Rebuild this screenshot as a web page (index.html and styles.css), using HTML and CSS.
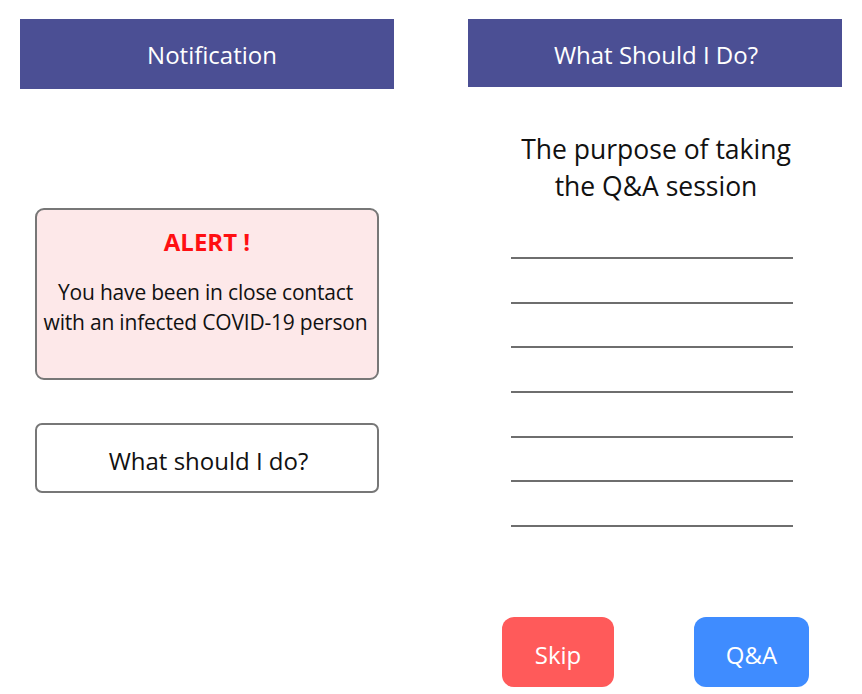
FILE: index.html
```html
<!DOCTYPE html>
<html>
<head>
<meta charset="utf-8">
<link rel="stylesheet" href="styles.css">
</head>
<body>
<div class="page">
  <section class="col left">
    <header class="bar bar-left">Notification</header>
    <div class="alert">
      <div class="alert-title">ALERT !</div>
      <div class="alert-text">You have been in close contact<br>with an infected COVID-19 person</div>
    </div>
    <div class="ask">What should I do?</div>
  </section>
  <section class="col right">
    <header class="bar bar-right">What Should I Do?</header>
    <div class="purpose">The purpose of taking<br>the Q&amp;A session</div>
    <div class="lines">
      <div class="line"></div>
      <div class="line"></div>
      <div class="line"></div>
      <div class="line"></div>
      <div class="line"></div>
      <div class="line"></div>
      <div class="line"></div>
    </div>
    <div class="actions">
      <button class="btn skip">Skip</button>
      <button class="btn qa">Q&amp;A</button>
    </div>
  </section>
</div>
</body>
</html>
```

FILE: styles.css
```css
* { box-sizing: border-box; }
html, body { margin: 0; padding: 0; background: #ffffff; }
body {
  font-family: "Open Sans", "Noto Sans", "Liberation Sans", sans-serif;
  color: #111111;
  width: 862px;
  height: 694px;
  overflow: hidden;
}
.page {
  display: flex;
  padding: 19px 20px 0 20px;
  gap: 74px;
}
.col {
  width: 374px;
  display: flex;
  flex-direction: column;
}
.bar {
  background: #4b4f94;
  color: #ffffff;
  font-size: 24px;
  display: flex;
  align-items: center;
  justify-content: center;
}
.bar-left { height: 70px; padding-top: 1px; padding-left: 10px; }
.bar-right { height: 68px; padding-top: 2px; padding-left: 2px; }

.alert {
  margin: 119px 15px 0 15px;
  height: 172px;
  background: #fde8e9;
  border: 2px solid #777777;
  border-radius: 9px;
  text-align: center;
  padding-top: 16px;
}
.alert-title {
  color: #ff0f12;
  font-weight: 700;
  font-size: 24px;
  line-height: 32px;
}
.alert-text {
  margin-top: 19px;
  font-size: 21px;
  line-height: 30px;
  letter-spacing: -0.2px;
  padding-right: 3px;
}
.ask {
  margin: 43px 15px 0 15px;
  height: 70px;
  border: 2px solid #777777;
  border-radius: 7px;
  display: flex;
  align-items: center;
  justify-content: center;
  font-size: 24px;
  padding-top: 4px;
  padding-left: 3px;
}

.purpose {
  margin-top: 44px;
  text-align: center;
  font-size: 26.5px;
  line-height: 37px;
  padding-left: 2px;
}
.lines {
  margin: 26px 49px 0 43px;
}
.line {
  height: 44.7px;
  border-bottom: 2px solid #6e6e6e;
}
.line:first-child { height: 28px; }
.actions {
  display: flex;
  margin-top: 90px;
  padding-left: 34px;
  gap: 80px;
}
.btn {
  border: none;
  height: 70px;
  border-radius: 12px;
  color: #ffffff;
  font-family: inherit;
  font-size: 24px;
  padding: 4px 0 0 0;
}
.skip { width: 112px; background: #ff5a5a; }
.qa { width: 115px; background: #3f8cff; }
```
